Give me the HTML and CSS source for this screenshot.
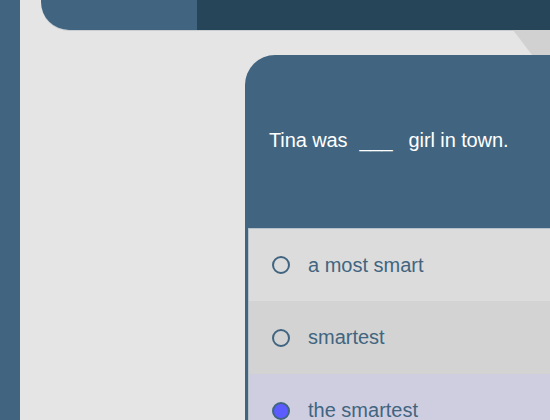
FILE: index.html
```html
<!DOCTYPE html>
<html lang="en">
<head>
<meta charset="utf-8">
<title>Quiz</title>
<link rel="stylesheet" href="styles.css">
</head>
<body>
  <div class="sidebar"></div>
  <div class="main">
    <div class="topbar">
      <div class="tb-left"></div>
      <div class="tb-right"></div>
    </div>
    <div class="band">
      <div class="shade"></div>
    </div>
    <div class="card">
      <div class="question">Tina was<span class="blank">___</span>girl in town.</div>
      <div class="options">
        <div class="option opt-1"><span class="radio"></span><span class="label">a most smart</span></div>
        <div class="option opt-2"><span class="radio"></span><span class="label">smartest</span></div>
        <div class="option opt-3"><span class="radio checked"></span><span class="label">the smartest</span></div>
      </div>
    </div>
  </div>
</body>
</html>
```
FILE: styles.css
```css
html, body {
  margin: 0;
  padding: 0;
}
body {
  width: 550px;
  height: 420px;
  overflow: hidden;
  display: flex;
  background: #e5e5e5;
  font-family: "Liberation Sans", Arial, sans-serif;
}
.sidebar {
  width: 20px;
  flex: none;
  background: #416580;
}
.main {
  flex: 1;
  padding-left: 21px;
  display: flex;
  flex-direction: column;
  min-width: 0;
}
.topbar {
  height: 30px;
  flex: none;
  display: flex;
  border-bottom-left-radius: 28px;
  overflow: hidden;
  box-shadow: 0 1px 0 #c9ced2;
}
.tb-left {
  width: 156px;
  background: #416580;
}
.tb-right {
  flex: 1;
  background: #274559;
}
.band {
  height: 25px;
  flex: none;
  display: flex;
  justify-content: flex-end;
}
.shade {
  width: 37px;
  background: #d1d1d1;
  clip-path: polygon(0 0, 100% 0, 100% 100%, 19px 100%);
}
.card {
  flex: 1;
  margin-left: 204px;
  background: #416580;
  border-top-left-radius: 30px;
  padding-left: 3px;
  display: flex;
  flex-direction: column;
  overflow: hidden;
}
.question {
  height: 173px;
  flex: none;
  box-sizing: border-box;
  padding: 74px 0 0 21px;
  color: #ffffff;
  font-size: 20px;
  line-height: 23px;
  white-space: nowrap;
  letter-spacing: -0.1px;
}
.blank {
  margin: 0 16px 0 12px;
}
.options {
  flex: 1;
  border-top: 1px solid #b7c1ca;
  border-left: 1px solid #b7c1ca;
}
.option {
  height: 73px;
  display: flex;
  align-items: center;
  padding-left: 23px;
  gap: 18px;
  color: #416580;
  font-size: 20px;
}
.opt-1 { background: #dcdcdc; height: 72px; }
.opt-2 { background: #d3d3d3; }
.opt-3 { background: #cfcde0; }
.radio {
  width: 18px;
  height: 18px;
  box-sizing: border-box;
  border: 2px solid #416580;
  border-radius: 50%;
  flex: none;
}
.radio.checked {
  background: #5b5bff;
}
```
